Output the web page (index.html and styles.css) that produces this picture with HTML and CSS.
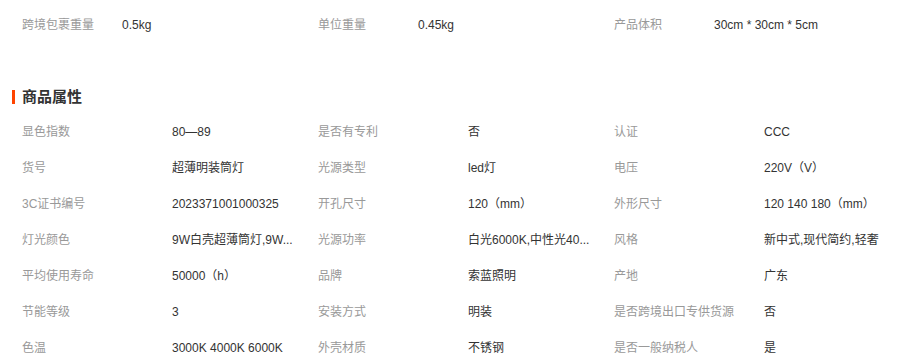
FILE: index.html
```html
<!DOCTYPE html>
<html lang="zh-CN">
<head>
<meta charset="utf-8">
<link rel="stylesheet" href="styles.css">
</head>
<body>
<div class="page">
  <div class="pack">
    <span class="lbl">跨境包裹重量</span><span class="val">0.5kg</span>
    <span class="lbl">单位重量</span><span class="val">0.45kg</span>
    <span class="lbl">产品体积</span><span class="val">30cm * 30cm * 5cm</span>
  </div>
  <h2 class="title">商品属性</h2>
  <div class="attrs">
    <span class="lbl">显色指数</span><span class="val">80—89</span>
    <span class="lbl">是否有专利</span><span class="val">否</span>
    <span class="lbl">认证</span><span class="val">CCC</span>

    <span class="lbl">货号</span><span class="val">超薄明装筒灯</span>
    <span class="lbl">光源类型</span><span class="val">led灯</span>
    <span class="lbl">电压</span><span class="val">220V（V）</span>

    <span class="lbl">3C证书编号</span><span class="val">2023371001000325</span>
    <span class="lbl">开孔尺寸</span><span class="val">120（mm）</span>
    <span class="lbl">外形尺寸</span><span class="val">120 140 180（mm）</span>

    <span class="lbl">灯光颜色</span><span class="val">9W白壳超薄筒灯,9W...</span>
    <span class="lbl">光源功率</span><span class="val">白光6000K,中性光40...</span>
    <span class="lbl">风格</span><span class="val">新中式,现代简约,轻奢</span>

    <span class="lbl">平均使用寿命</span><span class="val">50000（h）</span>
    <span class="lbl">品牌</span><span class="val">索蓝照明</span>
    <span class="lbl">产地</span><span class="val">广东</span>

    <span class="lbl">节能等级</span><span class="val">3</span>
    <span class="lbl">安装方式</span><span class="val">明装</span>
    <span class="lbl">是否跨境出口专供货源</span><span class="val">否</span>

    <span class="lbl">色温</span><span class="val">3000K 4000K 6000K</span>
    <span class="lbl">外壳材质</span><span class="val">不锈钢</span>
    <span class="lbl">是否一般纳税人</span><span class="val">是</span>
  </div>
</div>
</body>
</html>
```
FILE: styles.css
```css
html, body {
  margin: 0;
  padding: 0;
  background: #fff;
}
.page {
  font-family: "Liberation Sans", "Noto Sans CJK SC", sans-serif;
  font-size: 12px;
  color: #333;
  padding-left: 22px;
  width: 896px;
}
.lbl {
  color: #999;
  white-space: nowrap;
}
.val {
  color: #333;
  white-space: nowrap;
}
.pack {
  display: grid;
  grid-template-columns: 100px 196px 100px 196px 100px auto;
  align-items: center;
  height: 36px;
  line-height: 36px;
  padding-top: 7px;
}
.title {
  position: relative;
  margin: 44px 0 7px;
  font-size: 15px;
  font-weight: bold;
  color: #333;
  line-height: 20px;
  height: 20px;
}
.title::before {
  content: "";
  position: absolute;
  left: -10px;
  top: 3px;
  width: 3px;
  height: 14px;
  background: #ff4400;
}
.attrs {
  display: grid;
  grid-template-columns: 150px 146px 150px 146px 150px auto;
  grid-auto-rows: 36px;
  align-items: center;
  line-height: 36px;
}
```
